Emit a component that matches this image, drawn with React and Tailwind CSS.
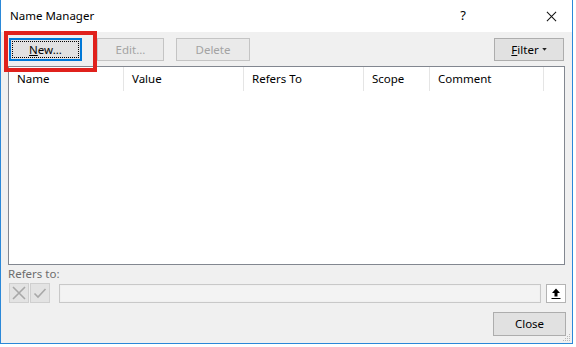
import React from "react";

const font = { fontFamily: '"Noto Sans", "Segoe UI", sans-serif' };

function Btn({ children, disabled, focused, className = "" }) {
    const base = "h-[23px] flex items-center justify-center text-[11.5px] border";
    if (focused) {
        return (
            <div className={`${base} border-[#0078d7] border-2 bg-[#e1e1e1] text-black p-[1px] ${className}`}>
                <div className="w-full h-full flex items-center justify-center border border-dotted border-black">
                    {children}
                </div>
            </div>
        );
    }
    return (
        <div
            className={`${base} ${disabled ? "bg-[#eaeaea] border-[#c4c4c4] text-[#a3a3a3]" : "bg-[#e1e1e1] border-[#adadad] text-black"} ${className}`}
        >
            {children}
        </div>
    );
}

const columns = [
    { label: "Name", w: "w-[115px]" },
    { label: "Value", w: "w-[120px]" },
    { label: "Refers To", w: "w-[120px]" },
    { label: "Scope", w: "w-[66px]" },
    { label: "Comment", w: "w-[114px]" },
];

export default function App() {
    return (
        <div className="w-[576px] h-[347px] bg-white overflow-hidden" style={font}>
            <div className="relative w-[573px] h-[344px] border border-t-0 border-[#2b88d8] bg-[#f0f0f0] flex flex-col">
                {/* Title bar */}
                <div className="h-[32px] bg-white flex items-center pl-[9px] text-[11.5px] text-black shrink-0">
                    <span>Name Manager</span>
                    <span className="ml-auto mr-[80px] text-[13px]">?</span>
                    <svg viewBox="0 0 12 12" className="w-[11px] h-[11px] mr-[15px]">
                        <path d="M1 1L11 11M11 1L1 11" stroke="#111" strokeWidth="1.1" />
                    </svg>
                </div>

                {/* Toolbar */}
                <div className="flex items-center h-[23px] mt-[6px] pl-[8px] pr-[8px] shrink-0">
                    <Btn focused className="w-[73px]">
                        <span><span className="underline">N</span>ew...</span>
                    </Btn>
                    <Btn disabled className="w-[67px] ml-[15px]">Edit...</Btn>
                    <Btn disabled className="w-[74px] ml-[12px]">Delete</Btn>
                    <Btn className="w-[70px] ml-auto">
                        <span><span className="underline">F</span>ilter</span>
                        <svg viewBox="0 0 6 4" className="w-[5px] h-[3px] ml-[3px]">
                            <path d="M0 0H6L3 3.5Z" fill="#222" />
                        </svg>
                    </Btn>
                </div>

                {/* List */}
                <div className="mx-[7px] mt-[5px] h-[199px] bg-white border border-[#828790] shrink-0">
                    <div className="flex h-[24px] text-[11.5px] text-black">
                        {columns.map((c) => (
                            <div key={c.label} className={`${c.w} flex items-center pl-[8px] border-r border-[#e5e5e5]`}>
                                {c.label}
                            </div>
                        ))}
                    </div>
                </div>

                {/* Refers to */}
                <div className="pl-[7px] mt-[1px] h-[16px] text-[11.5px] text-[#6d6d6d] leading-[16px] shrink-0">Refers to:</div>
                <div className="flex items-center mt-[1px] pl-[8px] pr-[6px] h-[20px] shrink-0">
                    <div className="w-[20px] h-[20px] bg-[#e3e3e3] border border-[#cfcfcf] flex items-center justify-center">
                        <svg viewBox="0 0 14 14" className="w-[14px] h-[14px]">
                            <path d="M1 1L13 13M13 1L1 13" stroke="#a8a8a8" strokeWidth="1.6" />
                        </svg>
                    </div>
                    <div className="w-[20px] h-[20px] ml-[1px] bg-[#e3e3e3] border border-[#cfcfcf] flex items-center justify-center">
                        <svg viewBox="0 0 14 14" className="w-[14px] h-[14px]">
                            <path d="M1.5 7.5L5 11L12.5 3" stroke="#a8a8a8" strokeWidth="1.6" fill="none" />
                        </svg>
                    </div>
                    <div className="w-[483px] h-[19px] ml-[9px] border border-[#c8c8c8] bg-[#f0f0f0] p-[1px]">
                        <div className="w-full h-full bg-[#f3f3f3]" />
                    </div>
                    <div className="w-[20px] h-[19px] ml-[5px] bg-white border border-[#b4b4b4] flex items-center justify-center">
                        <svg viewBox="0 0 10 11" className="w-[10px] h-[11px]">
                            <path d="M5 0.5L9 5H6.5V8.5H3.5V5H1Z" fill="#000" />
                            <path d="M0.5 10.5H9.5" stroke="#000" strokeWidth="1" />
                        </svg>
                    </div>
                </div>

                {/* Close */}
                <div className="flex justify-end pr-[6px] mt-[9px] shrink-0">
                    <Btn className="w-[73px] h-[24px]">Close</Btn>
                </div>

                {/* Resize grip */}
                <svg viewBox="0 0 10 10" className="absolute right-[1px] bottom-[1px] w-[10px] h-[10px]">
                    <g fill="#b8b8b8">
                        <rect x="8" y="2" width="1" height="1" />
                        <rect x="6" y="4" width="1" height="1" />
                        <rect x="8" y="4" width="1" height="1" />
                        <rect x="4" y="6" width="1" height="1" />
                        <rect x="6" y="6" width="1" height="1" />
                        <rect x="8" y="6" width="1" height="1" />
                        <rect x="2" y="8" width="1" height="1" />
                        <rect x="4" y="8" width="1" height="1" />
                        <rect x="6" y="8" width="1" height="1" />
                        <rect x="8" y="8" width="1" height="1" />
                    </g>
                </svg>

                {/* Red highlight annotation */}
                <div className="absolute left-[3px] top-[31px] w-[93px] h-[41px] border-[4px] border-[#e0211c] pointer-events-none" />
            </div>
        </div>
    );
}
